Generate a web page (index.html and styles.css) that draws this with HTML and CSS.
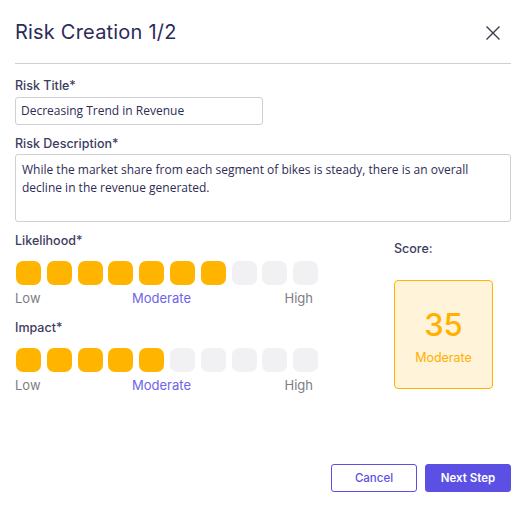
FILE: index.html
```html
<!DOCTYPE html>
<html>
<head>
<meta charset="utf-8">
<link rel="stylesheet" href="styles.css">
</head>
<body>
<div class="modal">
  <div class="header">
    <h1 class="title">Risk Creation 1/2</h1>
    <svg class="close" width="16" height="16" viewBox="0 0 16 16"><path d="M1.5 1.5 L14.5 14.5 M14.5 1.5 L1.5 14.5" stroke="#3a3a4a" stroke-width="1.4" fill="none"/></svg>
  </div>
  <div class="divider"></div>
  <label class="label first">Risk Title*</label>
  <div class="input">Decreasing Trend in Revenue</div>
  <label class="label gap">Risk Description*</label>
  <div class="textarea">While the market share from each segment of bikes is steady, there is an overall decline in the revenue generated.</div>
  <div class="ratings">
    <div class="left">
      <label class="label gap">Likelihood*</label>
      <div class="scale">
        <span class="sq on"></span><span class="sq on"></span><span class="sq on"></span><span class="sq on"></span><span class="sq on"></span><span class="sq on"></span><span class="sq on"></span><span class="sq"></span><span class="sq"></span><span class="sq"></span>
      </div>
      <div class="legend"><span class="lo">Low</span><span class="mid">Moderate</span><span class="hi">High</span></div>
      <label class="label gap2">Impact*</label>
      <div class="scale">
        <span class="sq on"></span><span class="sq on"></span><span class="sq on"></span><span class="sq on"></span><span class="sq on"></span><span class="sq"></span><span class="sq"></span><span class="sq"></span><span class="sq"></span><span class="sq"></span>
      </div>
      <div class="legend"><span class="lo">Low</span><span class="mid">Moderate</span><span class="hi">High</span></div>
    </div>
    <div class="right">
      <div class="score-label">Score:</div>
      <div class="score-box">
        <div class="score-num">35</div>
        <div class="score-text">Moderate</div>
      </div>
    </div>
  </div>
  <div class="footer">
    <button class="btn cancel">Cancel</button>
    <button class="btn next">Next Step</button>
  </div>
</div>
</body>
</html>
```

FILE: styles.css
```css
html, body {
  margin: 0;
  padding: 0;
  background: #ffffff;
}
body {
  font-family: "Inter", "Liberation Sans", sans-serif;
  color: #2e2c55;
}
.modal {
  width: 525px;
  height: 505px;
  box-sizing: border-box;
  padding: 18px 14px 0 15px;
}
.header {
  display: flex;
  align-items: center;
  justify-content: space-between;
  height: 28px;
}
.title {
  margin: 0;
  font-size: 20px;
  line-height: 28px;
  font-weight: 400;
  color: #2d2b58;
  letter-spacing: 0.2px;
}
.close {
  margin-right: 10px;
  margin-top: 2px;
}
.divider {
  height: 1px;
  background: #d0d0d4;
  margin-top: 17px;
}
.label {
  display: block;
  font-size: 12.5px;
  line-height: 18px;
  font-weight: 500;
  color: #3e3c5e;
}
.label.first { margin-top: 13px; }
.label.gap { margin-top: 10px; }
.label.gap2 { margin-top: 12px; }
.input {
  margin-top: 2px;
  width: 248px;
  height: 28px;
  box-sizing: border-box;
  border: 1px solid #cfcfd4;
  border-radius: 3px;
  padding: 0 5px;
  font-family: "Open Sans", "Liberation Sans", sans-serif;
  font-size: 12px;
  line-height: 26px;
  color: #2e2c55;
}
.textarea {
  margin-top: 1px;
  width: 496px;
  height: 68px;
  box-sizing: border-box;
  border: 1px solid #cfcfd4;
  border-radius: 3px;
  padding: 6px 6px;
  font-family: "Open Sans", "Liberation Sans", sans-serif;
  font-size: 12px;
  line-height: 18px;
  color: #2e2c55;
}
.ratings {
  display: flex;
}
.left {
  width: 379px;
}
.scale {
  display: flex;
  gap: 5.8px;
  margin-top: 11px;
  padding-left: 1px;
}
.sq {
  width: 25px;
  height: 24px;
  border-radius: 7px;
  background: #f1f1f4;
}
.sq.on {
  background: #ffb400;
}
.legend {
  display: flex;
  width: 298px;
  justify-content: space-between;
  margin-top: 4px;
  font-size: 13px;
  line-height: 18px;
  color: #7d7d82;
}
.legend .mid {
  color: #6f63e8;
  margin-left: -2px;
}
.right {
  width: 99px;
  padding-top: 18px;
}
.score-label {
  font-size: 12.5px;
  line-height: 18px;
  font-weight: 500;
  color: #3e3c5e;
}
.score-box {
  margin-top: 22px;
  height: 109px;
  box-sizing: border-box;
  border: 1px solid #ffb400;
  border-radius: 4px;
  background: #fff3da;
  display: flex;
  flex-direction: column;
  align-items: center;
  padding-top: 26px;
}
.score-num {
  font-size: 31px;
  line-height: 36px;
  font-weight: 500;
  color: #ffb000;
}
.score-text {
  margin-top: 6px;
  font-size: 12.5px;
  line-height: 18px;
  color: #ffb000;
}
.footer {
  display: flex;
  justify-content: flex-end;
  gap: 8px;
  margin-top: 70px;
}
.btn {
  width: 86px;
  height: 28px;
  box-sizing: border-box;
  border-radius: 3px;
  font-family: "Inter", "Liberation Sans", sans-serif;
  font-size: 11.5px;
  padding: 0;
}
.cancel {
  background: #ffffff;
  border: 1px solid #5b50e3;
  color: #5b50e3;
  font-weight: 500;
}
.next {
  background: #5b50e3;
  border: 1px solid #5b50e3;
  color: #ffffff;
  font-weight: 600;
}
```
